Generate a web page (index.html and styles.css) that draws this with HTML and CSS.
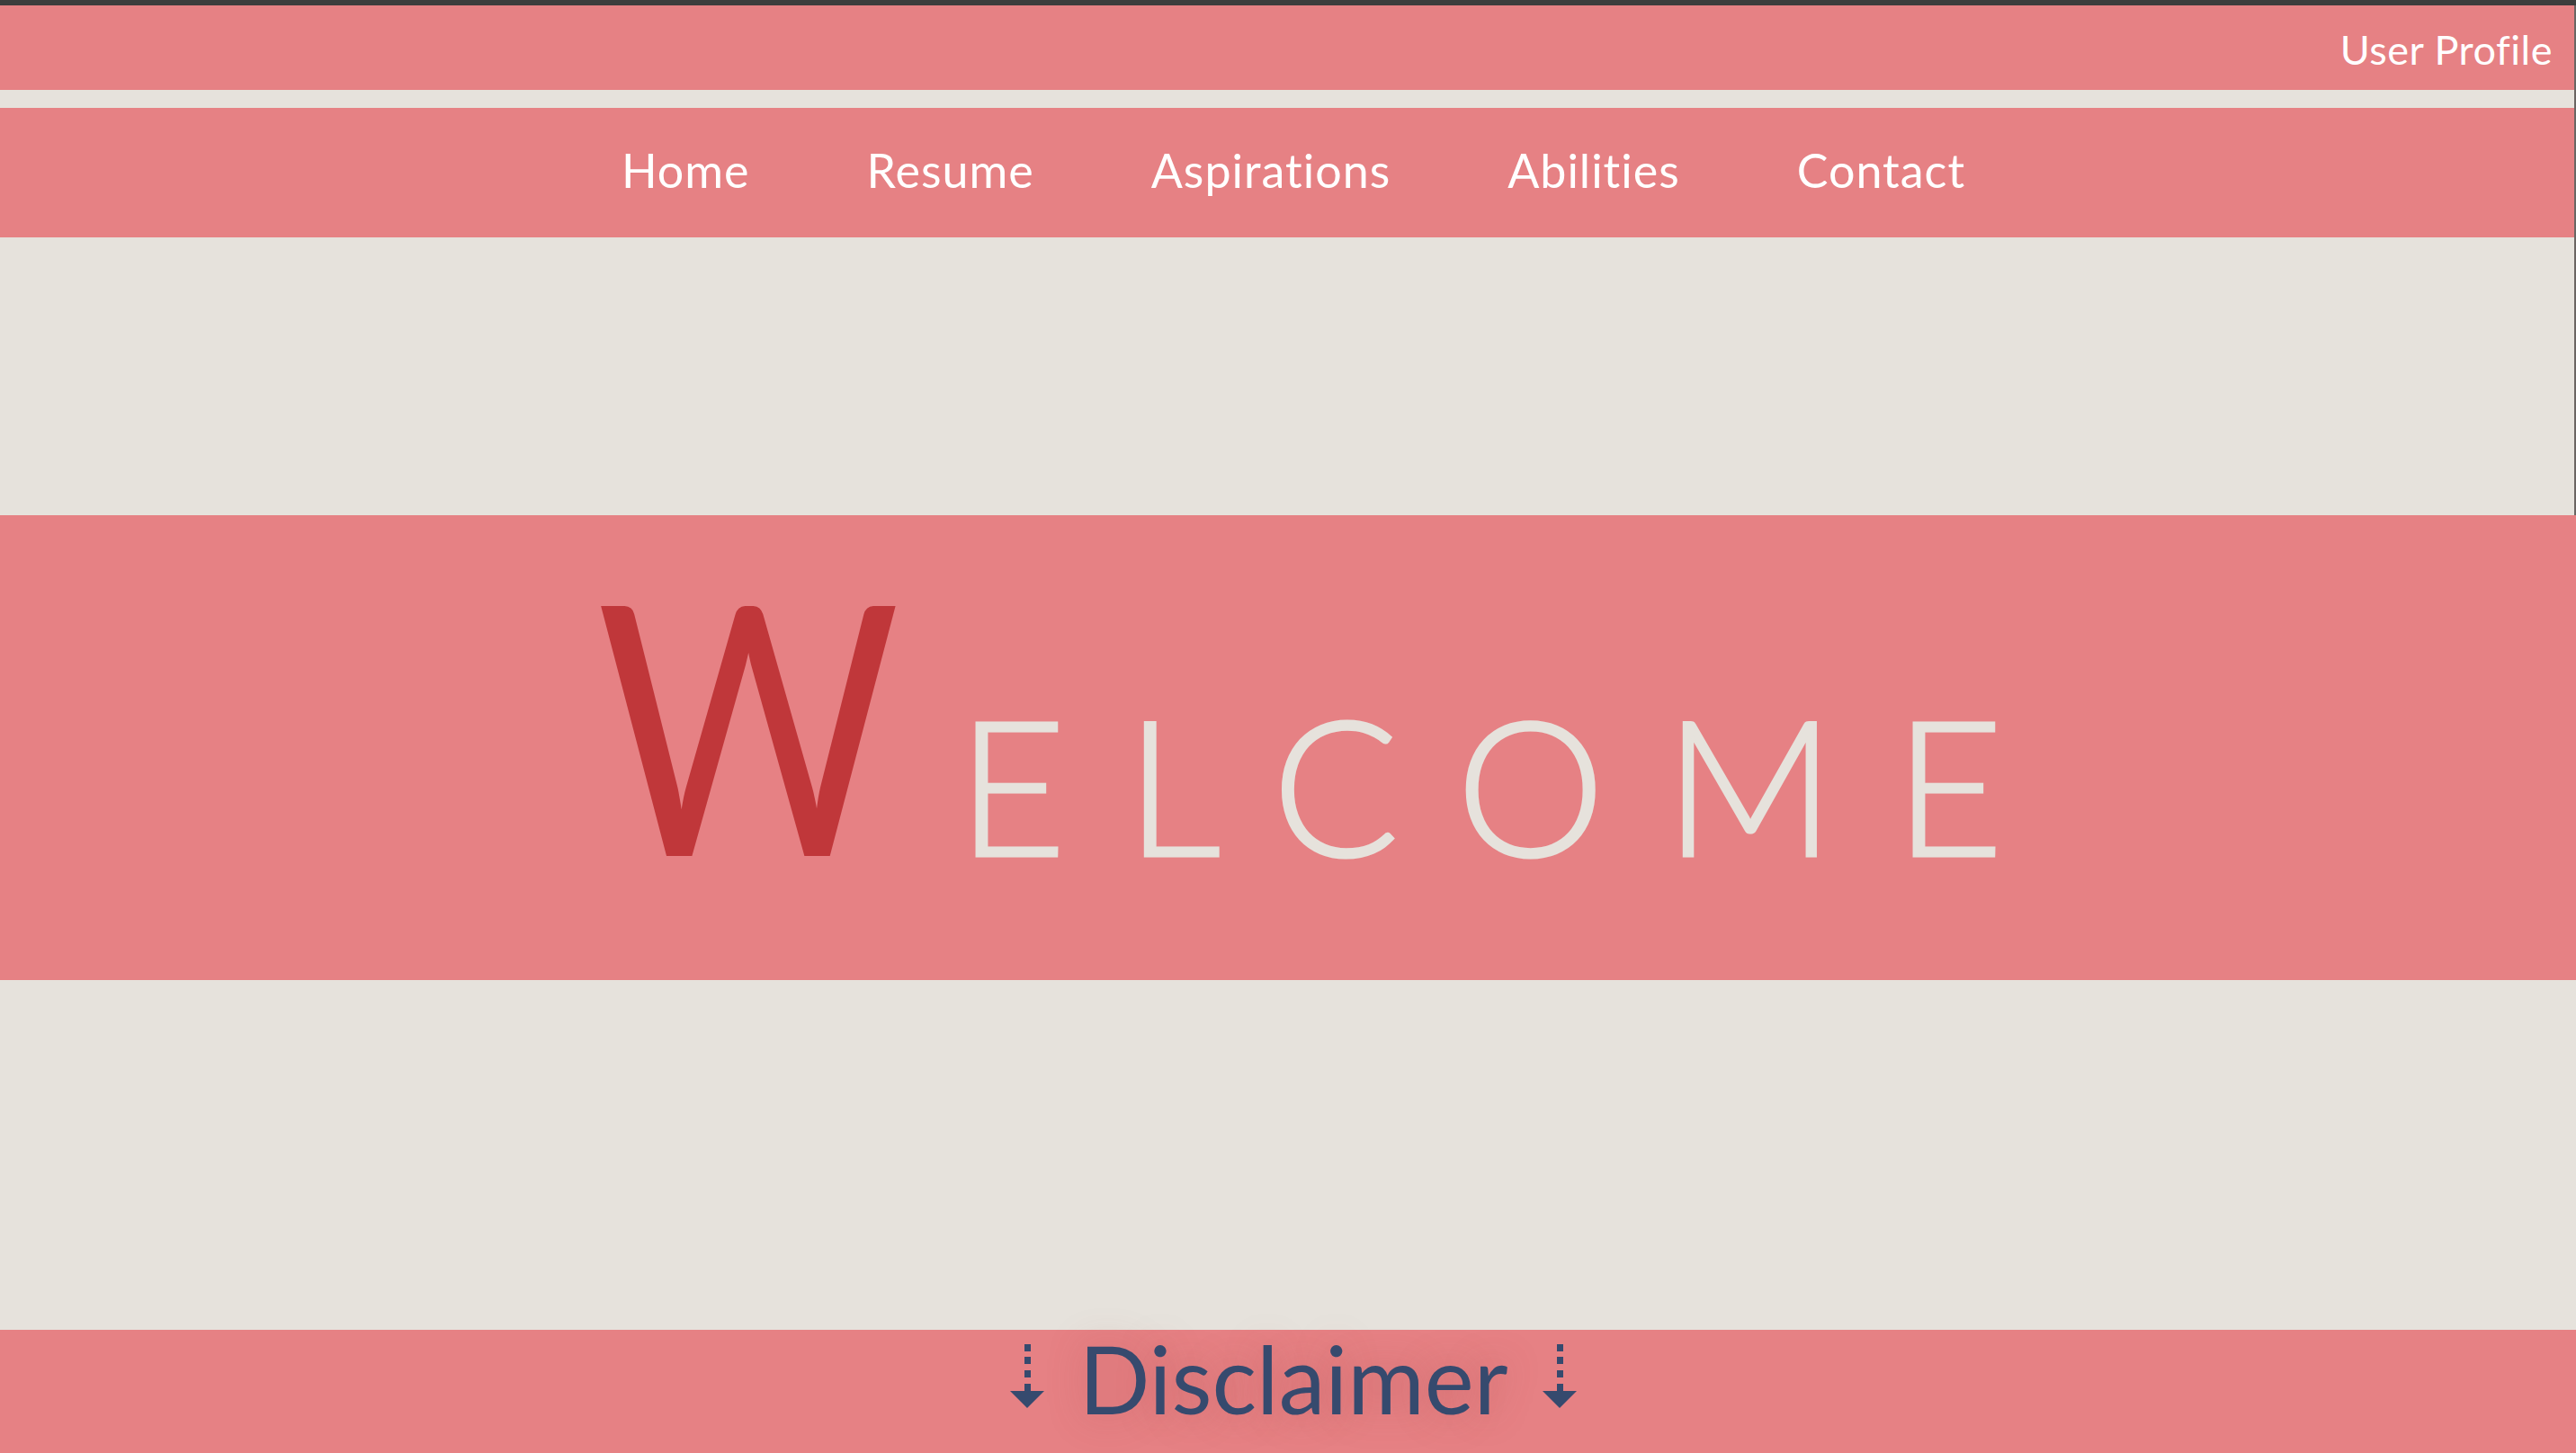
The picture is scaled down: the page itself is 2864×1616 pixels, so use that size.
FILE: index.html
```html
<!DOCTYPE html>
<html lang="en">
<head>
<meta charset="utf-8">
<title>Welcome</title>
<link rel="stylesheet" href="styles.css">
</head>
<body>
<div class="frame-bar"></div>
<div class="upper">
  <header class="topbar">
    <a class="profile" href="#">User Profile</a>
  </header>
  <nav class="nav">
    <a href="#">Home</a>
    <a href="#">Resume</a>
    <a href="#">Aspirations</a>
    <a href="#">Abilities</a>
    <a href="#">Contact</a>
  </nav>
  <div class="spacer"></div>
</div>
<section class="welcome">
  <h1 class="welcome-title"><span class="cap">W</span><span class="rest">ELCOME</span></h1>
</section>
<div class="spacer-lower"></div>
<section class="disclaimer">
  <h2 class="disclaimer-title">
    <svg class="arrow" viewBox="0 0 38 71" aria-hidden="true"><rect x="16" y="0" width="7" height="8"/><rect x="16" y="14" width="7" height="8"/><rect x="16" y="29" width="7" height="8"/><rect x="16" y="44" width="7" height="9"/><polygon points="0,52 38,52 19,71"/></svg>
    <span>Disclaimer</span>
    <svg class="arrow" viewBox="0 0 38 71" aria-hidden="true"><rect x="16" y="0" width="7" height="8"/><rect x="16" y="14" width="7" height="8"/><rect x="16" y="29" width="7" height="8"/><rect x="16" y="44" width="7" height="9"/><polygon points="0,52 38,52 19,71"/></svg>
  </h2>
</section>
</body>
</html>
```

FILE: styles.css
```css
* { box-sizing: border-box; }

html, body {
  margin: 0;
  padding: 0;
}

body {
  background: #e6e2dc;
  font-family: "Lato", "Liberation Sans", sans-serif;
  overflow: hidden;
}

a { text-decoration: none; color: inherit; }

.frame-bar {
  height: 6px;
  background: #3d3d3d;
}

.upper {
  border-right: 2px solid #6b6563;
  display: flex;
  flex-direction: column;
  gap: 20px;
}

.topbar {
  height: 94px;
  background: #e68184;
  display: flex;
  justify-content: flex-end;
  align-items: center;
  padding-right: 24px;
  padding-top: 4px;
}

.profile {
  color: #ffffff;
  font-size: 45px;
  letter-spacing: 0.5px;
}

.nav {
  height: 144px;
  background: #e68184;
  display: flex;
  justify-content: center;
  align-items: center;
  gap: 130px;
  padding-left: 14px;
  padding-bottom: 6px;
}

.nav a {
  color: #ffffff;
  font-size: 52px;
  letter-spacing: 1px;
}

.spacer {
  height: 289px;
}

.welcome {
  height: 517px;
  background: #e68184;
  display: flex;
  justify-content: center;
  align-items: flex-end;
  padding-bottom: 94px;
}

.welcome-title {
  margin: 0;
  font-weight: 400;
  line-height: 1;
  display: flex;
  align-items: baseline;
  padding-left: 6px;
}

.cap {
  display: inline-block;
  color: #c0373a;
  font-size: 388px;
  transform: scaleX(0.84);
  margin-left: -12px;
  margin-right: 32px;
}

.rest {
  color: #e6e2dc;
  font-size: 209px;
  font-weight: 300;
  letter-spacing: 66px;
  margin-right: -66px;
  -webkit-text-stroke: 3px #e6e2dc;
}

.spacer-lower {
  height: 389px;
}

.disclaimer {
  height: 220px;
  background: #e68184;
  display: flex;
  justify-content: center;
  padding-top: 0;
}

.disclaimer-title {
  margin: 0;
  display: flex;
  align-items: center;
  gap: 38px;
  color: #364a6e;
  font-weight: 400;
  font-size: 104px;
  line-height: 1.1;
  height: 108px;
  text-shadow: 0 0 40px rgba(160, 70, 70, 0.35);
  padding-left: 12px;
}

.arrow {
  width: 38px;
  height: 71px;
  fill: #364a6e;
  margin-top: -6px;
}
```
